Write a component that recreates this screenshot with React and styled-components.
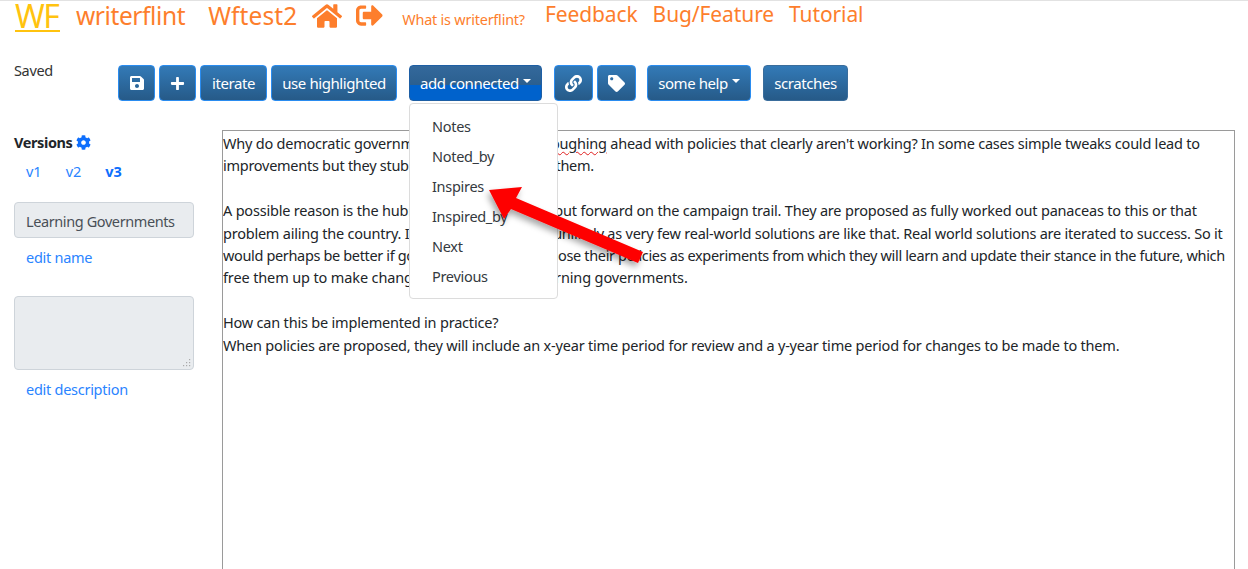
import React from "react";
import styled, { createGlobalStyle } from "styled-components";
import { FaHome, FaSignOutAlt, FaSave, FaPlus, FaLink, FaTag, FaCog } from "react-icons/fa";

const Global = createGlobalStyle`
  html, body { margin: 0; padding: 0; background: #fff; height: 100%; overflow: hidden; }
  body { font-family: "Noto Sans", "Open Sans", sans-serif; color: #212529; }
`;

const Page = styled.div`
  width: 1248px; height: 569px; overflow: hidden; position: relative;
  border-top: 1px solid #e2e2e2; box-sizing: border-box;
`;
const Header = styled.header`
  display: flex; align-items: flex-start; height: 64px; padding-left: 15px; color: #fd7e2c;
`;
const Logo = styled.a`
  font-size: 32px; line-height: 29px; height: 29px; color: #ffc30f; border-bottom: 2px solid #ffc30f;
  font-weight: 400; letter-spacing: -1.5px; margin-right: 16px; width: 45px; white-space: nowrap;
`;
const Brand = styled.a`
  font-size: 24.5px; line-height: 33px; margin-top: -2px; margin-right: ${p => p.$mr}px; letter-spacing: ${p => p.$ls}px; white-space: nowrap;
`;
const TopLink = styled.a`
  font-size: 21px; line-height: 26px; margin-right: ${p => p.$mr}px; letter-spacing: -0.1px; white-space: nowrap;
`;
const HeadIcon = styled.span`
  display: flex; font-size: ${p => p.$s}px; margin: ${p => p.$m}; color: #fd7e2c;
`;
const Small = styled.a`
  font-size: 14.4px; line-height: 18px; margin: 10px 20px 0 0; letter-spacing: -0.2px; white-space: nowrap;
`;
const Toolbar = styled.div`
  display: flex; height: 37px; align-items: stretch;
`;
const SavedLabel = styled.div`
  width: 118px; padding-left: 14px; box-sizing: border-box; font-size: 14.5px; line-height: 20px; color: #333; letter-spacing: -0.35px; margin-top: -5px;
`;
const Btn = styled.button`
  box-sizing: border-box; font-family: inherit; height: 36px; padding: 0; width: ${p => p.$w}px;
  margin-left: ${p => p.$ml || 4}px; border-radius: 4px; color: #fff; font-size: 15px; letter-spacing: -0.42px;
  display: flex; align-items: center; justify-content: center; gap: 4px; white-space: nowrap;
  border: 1px solid ${p => p.$dark ? "#3a6d9c" : "#2a8cf0"};
  background: ${p => p.$open ? "linear-gradient(#34699c 0, #2b5f8f 55%, #0062cc 56%, #0062cc 100%)" : "linear-gradient(#337ab7, #265a88)"};
  ${p => p.$open ? "border-color:#1e5fa5;" : ""}
  &:first-of-type { margin-left: 0; }
`;
const Caret = styled.i`
  display: inline-block; border-top: 4px solid #fff; border-left: 4px solid transparent; border-right: 4px solid transparent; margin-top: -4px;
`;
const Main = styled.main`
  display: flex; margin-top: 28px;
`;
const Side = styled.aside`
  width: 222px; flex: none; padding-left: 14px; box-sizing: border-box;
`;
const VersionsTitle = styled.div`
  display: flex; align-items: center; gap: 4px; font-size: 14.5px; font-weight: 700; line-height: 20px; margin-top: 2px; letter-spacing: -0.4px; color: #212529;
`;
const VersionRow = styled.div`
  display: flex; gap: 24px; padding-left: 12px; margin-top: 9px; font-size: 14.5px; line-height: 20px; color: #2a84ff;
`;
const VLink = styled.a`
  font-weight: ${p => p.$on ? 700 : 400}; color: ${p => p.$on ? "#0d6efd" : "#2a84ff"};
`;
const NameField = styled.div`
  width: 180px; height: 36px; margin-top: 21px; box-sizing: border-box; background: #e9ecef; border: 1px solid #ced4da; border-radius: 4px;
  padding-left: 11px; font-size: 14.5px; line-height: 36px; color: #495057; letter-spacing: -0.4px;
`;
const EditLink = styled.a`
  display: block; margin: ${p => p.$m}; padding-left: 12px; font-size: 14.5px; line-height: 20px; color: #2a84ff; letter-spacing: -0.27px;
`;
const DescField = styled.div`
  width: 180px; height: 74px; margin-top: 29px; box-sizing: border-box; background: #e9ecef; border: 1px solid #ced4da; border-radius: 4px; position: relative;
`;
const Grip = styled.svg`
  position: absolute; right: 2px; bottom: 2px;
`;
const Editor = styled.div`
  width: 1013px; height: 460px; box-sizing: border-box; border: 1px solid #9a9a9a; border-bottom: none; padding: 1px 0 0 0; font-size: 14.5px; line-height: 22.4px; color: #212529; overflow: hidden;
`;
const EditorLine = styled.div`
  white-space: pre; min-height: 22.4px; letter-spacing: ${p => p.$ls ?? -0.2}px;
`;
const Squiggle = styled.span`
  text-decoration: underline wavy #e02020 1px; text-underline-offset: 2px;
`;
const Menu = styled.div`
  position: absolute; left: 409px; top: 102px; width: 149px; height: 196px; box-sizing: border-box; background: #fff; border: 1px solid #dcdcdc; border-radius: 4px; padding: 7px 0 0 22px;
`;
const MenuItem = styled.div`
  font-size: 14.5px; line-height: 30px; color: #343a40; letter-spacing: -0.3px;
`;
const Arrow = styled.svg`
  position: absolute; left: 480px; top: 175px; overflow: visible;
`;

export default function App() {
  return (
    <Page>
      <Global />
      <Header>
        <Logo>WF</Logo>
        <Brand $mr={23} $ls={-0.4}>writerflint</Brand>
        <Brand $mr={15} $ls={0.1}>Wftest2</Brand>
        <HeadIcon $s={30} $m="0 14px 0 0"><FaHome /></HeadIcon>
        <HeadIcon $s={27} $m="1px 19px 0 0"><FaSignOutAlt /></HeadIcon>
        <Small>What is writerflint?</Small>
        <TopLink $mr={15}>Feedback</TopLink>
        <TopLink $mr={15}>Bug/Feature</TopLink>
        <TopLink>Tutorial</TopLink>
      </Header>
      <Toolbar>
        <SavedLabel>Saved</SavedLabel>
        <Btn $w={37}><FaSave size={16} /></Btn>
        <Btn $w={37}><FaPlus size={15} /></Btn>
        <Btn $w={67}>iterate</Btn>
        <Btn $w={126}>use highlighted</Btn>
        <Btn $w={133} $ml={12} $open>add connected <Caret /></Btn>
        <Btn $w={39} $ml={12}><FaLink size={17} /></Btn>
        <Btn $w={39}><FaTag size={17} /></Btn>
        <Btn $w={104} $ml={11}>some help <Caret /></Btn>
        <Btn $w={85} $ml={12} $dark>scratches</Btn>
      </Toolbar>
      <Main>
        <Side>
          <VersionsTitle>Versions <FaCog size={15} color="#0d6efd" /></VersionsTitle>
          <VersionRow>
            <VLink>v1</VLink><VLink>v2</VLink><VLink $on>v3</VLink>
          </VersionRow>
          <NameField>Learning Governments</NameField>
          <EditLink $m="9px 0 0">edit name</EditLink>
          <DescField>
            <Grip width="9" height="9" viewBox="0 0 9 9" fill="#aaa">
              <rect x="7" y="1" width="1.2" height="1.2" /><rect x="7" y="4" width="1.2" height="1.2" /><rect x="7" y="7" width="1.2" height="1.2" />
              <rect x="4" y="4" width="1.2" height="1.2" /><rect x="4" y="7" width="1.2" height="1.2" /><rect x="1" y="7" width="1.2" height="1.2" />
            </Grip>
          </DescField>
          <EditLink $m="9px 0 0">edit description</EditLink>
        </Side>
        <Editor>
          <EditorLine $ls={-0.225}>Why do democratic governments so often keep pl<Squiggle>oughing</Squiggle> ahead with policies that clearly aren't working? In some cases simple tweaks could lead to</EditorLine>
          <EditorLine $ls={-0.27}>improvements but they stubbornly refuse to apply them.</EditorLine>
          <EditorLine />
          <EditorLine>A possible reason is the hubris of the new policies put forward on the campaign trail. They are proposed as fully worked out panaceas to this or that</EditorLine>
          <EditorLine $ls={-0.225}>problem ailing the country. I think that this is very unlikely as very few real-world solutions are like that. Real world solutions are iterated to success. So it</EditorLine>
          <EditorLine $ls={-0.35}>would perhaps be better if governments could propose their policies as experiments from which they will learn and update their stance in the future, which</EditorLine>
          <EditorLine $ls={-0.13}>free them up to make changes. I call these the learning governments.</EditorLine>
          <EditorLine />
          <EditorLine>How can this be implemented in practice?</EditorLine>
          <EditorLine>When policies are proposed, they will include an x-year time period for review and a y-year time period for changes to be made to them.</EditorLine>
        </Editor>
      </Main>
      <Menu>
        <MenuItem>Notes</MenuItem>
        <MenuItem>Noted_by</MenuItem>
        <MenuItem>Inspires</MenuItem>
        <MenuItem>Inspired_by</MenuItem>
        <MenuItem>Next</MenuItem>
        <MenuItem>Previous</MenuItem>
      </Menu>
      <Arrow width="170" height="100" viewBox="0 0 170 100">
        <defs>
          <filter id="s" x="-20%" y="-20%" width="140%" height="150%">
            <feDropShadow dx="-2" dy="4" stdDeviation="3" floodColor="#000" floodOpacity="0.35" />
          </filter>
        </defs>
        <polygon filter="url(#s)" fill="#fe0000" points="9,14 42,11 36,22 163,76 158,87 31,33 24,43" />
      </Arrow>
    </Page>
  );
}
